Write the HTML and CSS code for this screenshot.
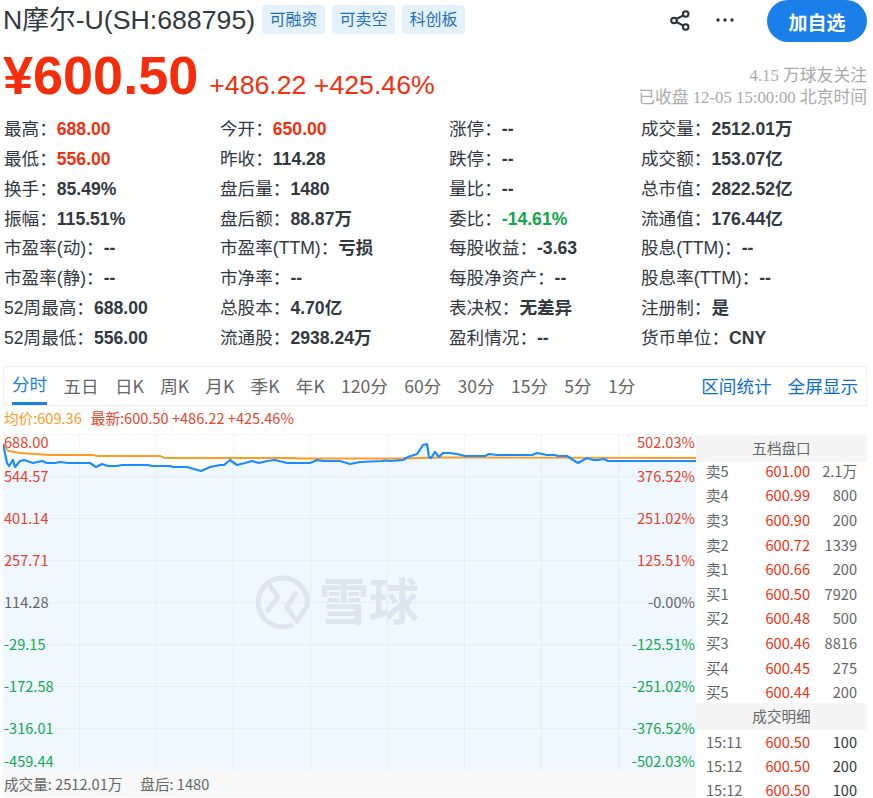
FILE: index.html
```html
<!DOCTYPE html>
<html lang="zh">
<head>
    <meta charset="UTF-8">
    <title>N摩尔-U(SH:688795)</title>
    <link rel="stylesheet" href="styles.css">
</head>
<body>
    <div class="head">
        <h1 class="name">N摩尔-U(SH:688795)</h1>
        <div class="tags">
            <span class="tag">可融资</span>
            <span class="tag">可卖空</span>
            <span class="tag">科创板</span>
        </div>
        <div class="actions">
            <svg class="icon-share" width="24" height="24" viewBox="0 0 24 24" fill="none" stroke="#2b2f36" stroke-width="2">
                <circle cx="17.700" cy="5" r="2.800"/>
                <circle cx="17.700" cy="18" r="2.800"/>
                <circle cx="6" cy="11.500" r="2.800"/>
                <path d="M8.500 10l6.800-3.700M8.500 13l6.800 3.700"/>
            </svg>
            <svg class="icon-more" width="20" height="24" viewBox="0 0 20 24" fill="#2b2f36">
                <circle cx="3" cy="11" r="1.700"/>
                <circle cx="10" cy="11" r="1.700"/>
                <circle cx="17" cy="11" r="1.700"/>
            </svg>
            <button class="follow">加自选</button>
        </div>
    </div>

    <div class="quote">
        <div class="price">¥600.50</div>
        <div class="change">+486.22 +425.46%</div>
        <div class="meta">
            <div>4.15 万球友关注</div>
            <div>已收盘 12-05 15:00:00 北京时间</div>
        </div>
    </div>

    <div class="stats">
        <div>最高：<b class="up">688.00</b></div>
        <div>今开：<b class="up">650.00</b></div>
        <div>涨停：<b>--</b></div>
        <div>成交量：<b>2512.01万</b></div>
        <div>最低：<b class="up">556.00</b></div>
        <div>昨收：<b>114.28</b></div>
        <div>跌停：<b>--</b></div>
        <div>成交额：<b>153.07亿</b></div>
        <div>换手：<b>85.49%</b></div>
        <div>盘后量：<b>1480</b></div>
        <div>量比：<b>--</b></div>
        <div>总市值：<b>2822.52亿</b></div>
        <div>振幅：<b>115.51%</b></div>
        <div>盘后额：<b>88.87万</b></div>
        <div>委比：<b class="down">-14.61%</b></div>
        <div>流通值：<b>176.44亿</b></div>
        <div>市盈率(动)：<b>--</b></div>
        <div>市盈率(TTM)：<b>亏损</b></div>
        <div>每股收益：<b>-3.63</b></div>
        <div>股息(TTM)：<b>--</b></div>
        <div>市盈率(静)：<b>--</b></div>
        <div>市净率：<b>--</b></div>
        <div>每股净资产：<b>--</b></div>
        <div>股息率(TTM)：<b>--</b></div>
        <div>52周最高：<b>688.00</b></div>
        <div>总股本：<b>4.70亿</b></div>
        <div>表决权：<b>无差异</b></div>
        <div>注册制：<b>是</b></div>
        <div>52周最低：<b>556.00</b></div>
        <div>流通股：<b>2938.24万</b></div>
        <div>盈利情况：<b>--</b></div>
        <div>货币单位：<b>CNY</b></div>
    </div>

    <div class="tabs">
        <a class="tab active">分时</a>
        <a class="tab">五日</a>
        <a class="tab">日K</a>
        <a class="tab">周K</a>
        <a class="tab">月K</a>
        <a class="tab">季K</a>
        <a class="tab">年K</a>
        <a class="tab">120分</a>
        <a class="tab">60分</a>
        <a class="tab">30分</a>
        <a class="tab">15分</a>
        <a class="tab">5分</a>
        <a class="tab">1分</a>
        <div class="tab-links">
            <a>区间统计</a>
            <a>全屏显示</a>
        </div>
    </div>

    <div class="legend">
        <span class="avg">均价:609.36</span>
        <span class="latest">最新:600.50 +486.22 +425.46%</span>
    </div>

    <div class="market">
        <div class="chart">
            <svg class="plot" width="693" height="336" viewBox="3 434 693 336">
                <path class="area" d="M3 444L5 453L7 463L9 466L13 460L15 467L20 461L24 460L33 463L42 461L47 463L55 463L60 462L68 463L90 463L96 467L102 464L108 466L117 466L122 465L148 465L152 466L170 466L173 467L187 467L201 471L210 467L220 465L224 465L230 460L237 465L245 463L252 461L259 463L267 461L275 460L287 463L310 463L317 460L323 461L340 461L350 464L360 462L382 461L385 460.500L390 461L403 460L408 457L417 454L423 445L427 444L429 457L431 458L435 452L439 457L443 453L450 453L457 454L465 456L485 456L489 454L497 455L532 455L537 453L547 455L555 455L558 456L567 456L578 463L587 458L593 460L598 460L604 459L608 461L696 461L696 771L3 771Z"/>
                <g class="grid">
                    <path d="M3 434.500H696M3 476.500H696M3 518.500H696M3 560.500H696M3 602.500H696M3 644.500H696M3 686.500H696M3 728.500H696"/>
                    <path d="M79.500 434V771M156.500 434V771M233.500 434V771M310.500 434V771M387.500 434V771M464.500 434V771M541.500 434V771M618.500 434V771"/>
                </g>
                <g class="mark">
                    <path d="M291 625.500A24.500 24.500 0 1 1 307 606L297 621.500L286.500 607L295.500 593.500"/>
                    <path d="M267.500 582.500L278 597L268 610"/>
                </g>
                <text class="mark-text" x="319" y="620">雪球</text>
                <path class="line-avg" d="M3 444L8 451L20 453L50 455L93 455L97 456L160 456L165 458L293 458L298 458.500L400 458.500L440 457.500L696 458"/>
                <path class="line-price" d="M3 444L5 453L7 463L9 466L13 460L15 467L20 461L24 460L33 463L42 461L47 463L55 463L60 462L68 463L90 463L96 467L102 464L108 466L117 466L122 465L148 465L152 466L170 466L173 467L187 467L201 471L210 467L220 465L224 465L230 460L237 465L245 463L252 461L259 463L267 461L275 460L287 463L310 463L317 460L323 461L340 461L350 464L360 462L382 461L385 460.500L390 461L403 460L408 457L417 454L423 445L427 444L429 457L431 458L435 452L439 457L443 453L450 453L457 454L465 456L485 456L489 454L497 455L532 455L537 453L547 455L555 455L558 456L567 456L578 463L587 458L593 460L598 460L604 459L608 461L696 461"/>
                <g class="axis">
                    <text class="up-t" x="4" y="448">688.00</text>
                    <text class="up-t" x="4" y="482">544.57</text>
                    <text class="up-t" x="4" y="524">401.14</text>
                    <text class="up-t" x="4" y="566">257.71</text>
                    <text class="flat-t" x="4" y="608">114.28</text>
                    <text class="down-t" x="4" y="650">-29.15</text>
                    <text class="down-t" x="4" y="692">-172.58</text>
                    <text class="down-t" x="4" y="734">-316.01</text>
                    <text class="down-t" x="4" y="767">-459.44</text>
                </g>
                <g class="axis axis-right">
                    <text class="up-t" x="695" y="448">502.03%</text>
                    <text class="up-t" x="695" y="482">376.52%</text>
                    <text class="up-t" x="695" y="524">251.02%</text>
                    <text class="up-t" x="695" y="566">125.51%</text>
                    <text class="flat-t" x="695" y="608">-0.00%</text>
                    <text class="down-t" x="695" y="650">-125.51%</text>
                    <text class="down-t" x="695" y="692">-251.02%</text>
                    <text class="down-t" x="695" y="734">-376.52%</text>
                    <text class="down-t" x="695" y="767">-502.03%</text>
                </g>
            </svg>
            <div class="volume">
                <span>成交量: 2512.01万</span>
                <span>盘后: 1480</span>
            </div>
        </div>

        <div class="book">
            <div class="book-title">五档盘口</div>
            <div class="book-rows">
                <div class="row"><span>卖5</span><span class="row-price">601.00</span><span>2.1万</span></div>
                <div class="row"><span>卖4</span><span class="row-price">600.99</span><span>800</span></div>
                <div class="row"><span>卖3</span><span class="row-price">600.90</span><span>200</span></div>
                <div class="row"><span>卖2</span><span class="row-price">600.72</span><span>1339</span></div>
                <div class="row"><span>卖1</span><span class="row-price">600.66</span><span>200</span></div>
                <div class="row"><span>买1</span><span class="row-price">600.50</span><span>7920</span></div>
                <div class="row"><span>买2</span><span class="row-price">600.48</span><span>500</span></div>
                <div class="row"><span>买3</span><span class="row-price">600.46</span><span>8816</span></div>
                <div class="row"><span>买4</span><span class="row-price">600.45</span><span>275</span></div>
                <div class="row"><span>买5</span><span class="row-price">600.44</span><span>200</span></div>
            </div>
            <div class="book-title book-title-trade">成交明细</div>
            <div class="book-rows book-rows-trade">
                <div class="row trade"><span>15:11</span><span class="row-price">600.50</span><span>100</span></div>
                <div class="row trade"><span>15:12</span><span class="row-price">600.50</span><span>200</span></div>
                <div class="row trade"><span>15:12</span><span class="row-price">600.50</span><span>100</span></div>
            </div>
        </div>
    </div>
</body>
</html>
```

FILE: styles.css
```css
* {
    margin: 0;
    padding: 0;
    box-sizing: border-box;
}

html, body {
    height: 798px;
    overflow: hidden;
}

body {
    background: #fff;
    color: #333;
    font-family: "Liberation Sans", "Noto Sans CJK SC", sans-serif;
    padding-right: 6px;
}

.head {
    display: flex;
    align-items: center;
    height: 42px;
    padding-left: 3px;
}

.name {
    font-size: 26.700px;
    font-weight: 400;
    line-height: 40px;
    margin-bottom: 2px;
    color: #33383f;
    white-space: nowrap;
}

.tags {
    display: flex;
    gap: 7px;
    margin-left: 7px;
    margin-bottom: 4px;
}

.tag {
    background: #e6f2fb;
    color: #1f6fbf;
    font-size: 16px;
    line-height: 29px;
    width: 63px;
    text-align: center;
    border-radius: 3px;
}

.actions {
    display: flex;
    align-items: center;
    margin-left: auto;
}

.icon-share {
    margin-right: 23px;
}

.icon-more {
    margin-right: 32px;
}

.follow {
    width: 100px;
    height: 42px;
    border: none;
    border-radius: 21px;
    background: #1a7fe8;
    color: #fff;
    font-family: inherit;
    font-size: 19px;
    font-weight: 700;
}

.quote {
    display: flex;
    align-items: flex-end;
    height: 72px;
    padding-left: 3px;
    padding-bottom: 8px;
}

.price {
    font-size: 54px;
    font-weight: 700;
    line-height: 62px;
    color: #f52d0b;
}

.change {
    margin-left: 11px;
    margin-bottom: 4px;
    font-size: 26.700px;
    line-height: 34px;
    color: #f0300f;
}

.meta {
    margin-left: auto;
    margin-bottom: -3px;
    text-align: right;
    font-family: "Liberation Serif", "Noto Sans CJK SC", serif;
    font-size: 16.800px;
    line-height: 22px;
    color: #aaa;
}

.stats {
    display: grid;
    grid-template-columns: 216px 229px 192px 1fr;
    grid-auto-rows: 29.850px;
    padding: 1px 0 0 4px;
    font-size: 17.600px;
    line-height: 29.850px;
    color: #33383f;
    white-space: nowrap;
}

.stats b {
    font-weight: 700;
    color: #33383f;
}

.stats b.up {
    color: #f0300f;
}

.stats b.down {
    color: #13a54a;
}

.tabs {
    display: flex;
    align-items: center;
    gap: 16.250px;
    height: 40px;
    margin: 12px 0 0 3px;
    padding: 0 8px;
    border: 1px solid #eee;
    font-family: "Noto Sans CJK SC", sans-serif;
    font-size: 17.600px;
    color: #666;
}

.tab {
    line-height: 34px;
    white-space: nowrap;
}

.tab.active {
    color: #1a7fe8;
    border-bottom: 3px solid #1a7fe8;
    height: 38px;
    margin-top: 1px;
}

.tab-links {
    display: flex;
    gap: 16px;
    margin-left: auto;
    color: #0c6ed1;
}

.legend {
    display: flex;
    gap: 9px;
    height: 28px;
    padding-left: 4px;
    font-family: "Noto Sans CJK SC", sans-serif;
    font-size: 14.600px;
    line-height: 24px;
}

.avg {
    color: #ff9a1f;
}

.latest {
    color: #e8452c;
}

.market {
    display: flex;
    align-items: flex-start;
    font-family: "Noto Sans CJK SC", sans-serif;
}

.chart {
    width: 693px;
    margin-left: 3px;
}

.plot {
    display: block;
}

.area {
    fill: #eff7ff;
}

.grid path {
    fill: none;
    stroke: #000;
    stroke-opacity: 0.04;
    stroke-width: 1;
}

.mark path {
    fill: none;
    stroke: #dce6f1;
    stroke-width: 5;
    stroke-linecap: round;
    stroke-linejoin: round;
}

.mark-text {
    font-size: 50px;
    font-weight: 700;
    fill: #dce6f1;
}

.line-avg {
    fill: none;
    stroke: #ff9a1f;
    stroke-width: 1.800;
}

.line-price {
    fill: none;
    stroke: #1a8cff;
    stroke-width: 2.200;
    stroke-linejoin: round;
}

.axis text {
    font-size: 14.600px;
}

.axis-right text {
    text-anchor: end;
}

.up-t {
    fill: #e8402a;
}

.flat-t {
    fill: #666;
}

.down-t {
    fill: #14a84f;
}

.volume {
    display: flex;
    gap: 18px;
    height: 27px;
    padding-left: 1px;
    background: #f8f8f8;
    font-size: 14.600px;
    line-height: 27px;
    color: #666;
}

.book {
    width: 171px;
    margin-top: 1px;
    font-size: 14.600px;
}

.book-title {
    background: #f5f5f5;
    color: #666;
    text-align: center;
    line-height: 26px;
    height: 27px;
}

.book-title-trade {
    margin-top: -2px;
    position: relative;
}

.book-rows {
    margin-top: -3px;
    padding: 0 10px;
}

.book-rows-trade {
    margin-top: 0;
}

.row {
    display: grid;
    grid-template-columns: 44px 1fr 47px;
    height: 24.600px;
    line-height: 24.600px;
    color: #666;
}

.row.trade {
    height: 24px;
    line-height: 24px;
}

.row span:last-child {
    text-align: right;
}

.row .row-price {
    text-align: right;
    color: #f0300f;
}

.trade span:last-child {
    color: #33383f;
}
```
